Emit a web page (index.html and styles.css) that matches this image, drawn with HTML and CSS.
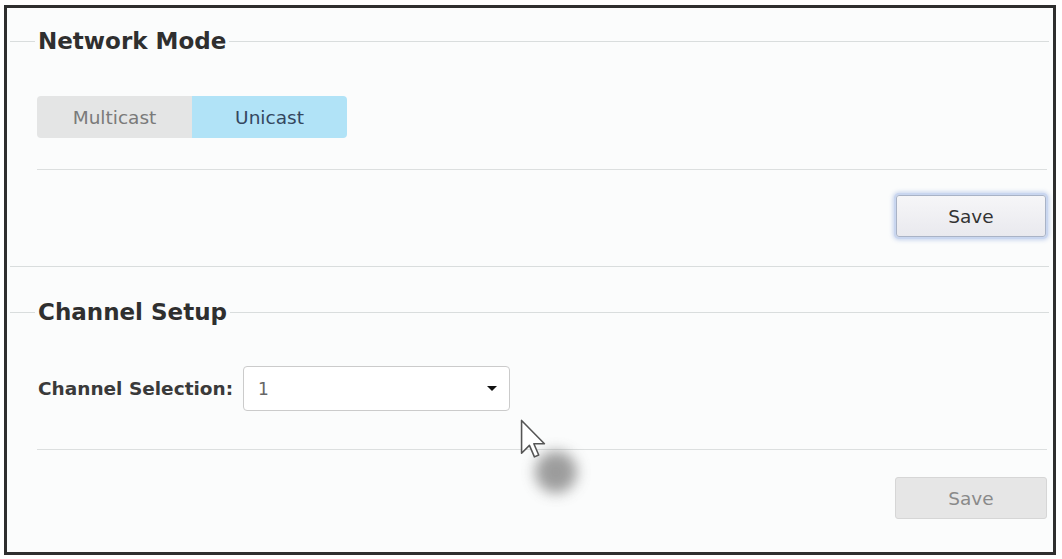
FILE: index.html
```html
<!DOCTYPE html>
<html lang="en">
<head>
    <meta charset="UTF-8">
    <meta name="viewport" content="width=device-width, initial-scale=1.0">
    <title>Network Settings</title>
    <link rel="stylesheet" href="styles.css">
</head>
<body>
    <div class="frame">
        <fieldset class="section first">
            <legend>Network Mode</legend>
            <div class="seg">
                <button class="seg-btn">Multicast</button>
                <button class="seg-btn active">Unicast</button>
            </div>
            <div class="actions">
                <button class="save focus">Save</button>
            </div>
        </fieldset>
        <fieldset class="section second">
            <legend>Channel Setup</legend>
            <div class="row">
                <label class="lbl">Channel Selection:</label>
                <div class="select">
                    <span>1</span>
                    <span class="caret"></span>
                </div>
            </div>
            <div class="actions">
                <button class="save" disabled>Save</button>
            </div>
        </fieldset>

        <!-- mouse pointer + click ripple -->
        <div class="ripple"></div>
        <svg class="pointer" width="26" height="40" viewBox="0 0 18 28">
            <path d="M1 1 L1 24 L6.5 18.5 L10 26.5 L13 25.2 L9.6 17.3 L17 17.3 Z" fill="#fff" stroke="#555" stroke-width="1.1" stroke-linejoin="round"/>
        </svg>
    </div>
</body>
</html>
```
FILE: styles.css
```css
*{
    box-sizing: border-box;
    margin: 0;
    padding: 0;
    font-family: "DejaVu Sans", Verdana, sans-serif;
}
body{
    background: #fff;
}
.frame{
    position: relative;
    margin: 5px 6px 4px 4px;
    height: 550px;
    border: 3px solid #2e2e2e;
    background: #fbfcfc;
    overflow: hidden;
}
.section{
    border: 0;
    border-top: 1px solid #d9dddd;
    margin: 0 4px 0 3px;
    padding: 0 0 0 27px;
}
.section.first{
    margin-top: 20px;
    border-bottom: 1px solid #d9dddd;
}
.section.second{
    margin-top: 32px;
}
legend{
    margin-left: -2px;
    padding: 0 3px;
    font-size: 23px;
    line-height: 26px;
    font-weight: bold;
    color: #2f2f2f;
}
.seg{
    display: flex;
    width: 310px;
    margin-top: 42px;
    border-radius: 4px;
    overflow: hidden;
}
.seg-btn{
    width: 155px;
    height: 42px;
    border: 0;
    background: #e4e5e5;
    color: #7a7a7a;
    font-size: 18.5px;
}
.seg-btn.active{
    background: #b1e3f7;
    color: #34475f;
}
.actions{
    display: flex;
    justify-content: flex-end;
    margin-top: 31px;
    margin-right: 2px;
    border-top: 1px solid #dcdfdf;
    padding: 25px 1px 29px 0;
}
.second .actions{
    margin-top: 38px;
    padding: 27px 0 0 0;
}
.save{
    width: 152px;
    height: 42px;
    border: 1px solid #d6d6d6;
    border-radius: 3px;
    background: #e6e6e6;
    color: #8a8a8a;
    font-size: 18.5px;
}
.save.focus{
    width: 150px;
    border-color: #a9b3c6;
    background: linear-gradient(#f6f6f8, #e9e9ee);
    color: #333;
    box-shadow: 0 0 0 2px #c9d6ef, 0 0 4px 3px rgba(130,160,220,0.45);
}
.row{
    display: flex;
    align-items: center;
    margin-top: 41px;
    margin-left: 1px;
}
.lbl{
    font-size: 18.5px;
    font-weight: bold;
    color: #3a3a3a;
    margin-right: 10px;
}
.select{
    display: flex;
    align-items: center;
    justify-content: space-between;
    width: 267px;
    height: 45px;
    padding: 0 12px 0 14px;
    background: #fff;
    border: 1px solid #cbcbcb;
    border-radius: 4px;
    color: #666;
    font-size: 17px;
}
.caret{
    width: 0;
    height: 0;
    border-left: 5px solid transparent;
    border-right: 5px solid transparent;
    border-top: 5px solid #111;
}
.pointer{
    position: absolute;
    left: 513px;
    top: 411px;
}
.ripple{
    position: absolute;
    left: 528px;
    top: 443px;
    width: 42px;
    height: 42px;
    border-radius: 50%;
    background: #858585;
    filter: blur(7px);
    opacity: 0.8;
}
```
